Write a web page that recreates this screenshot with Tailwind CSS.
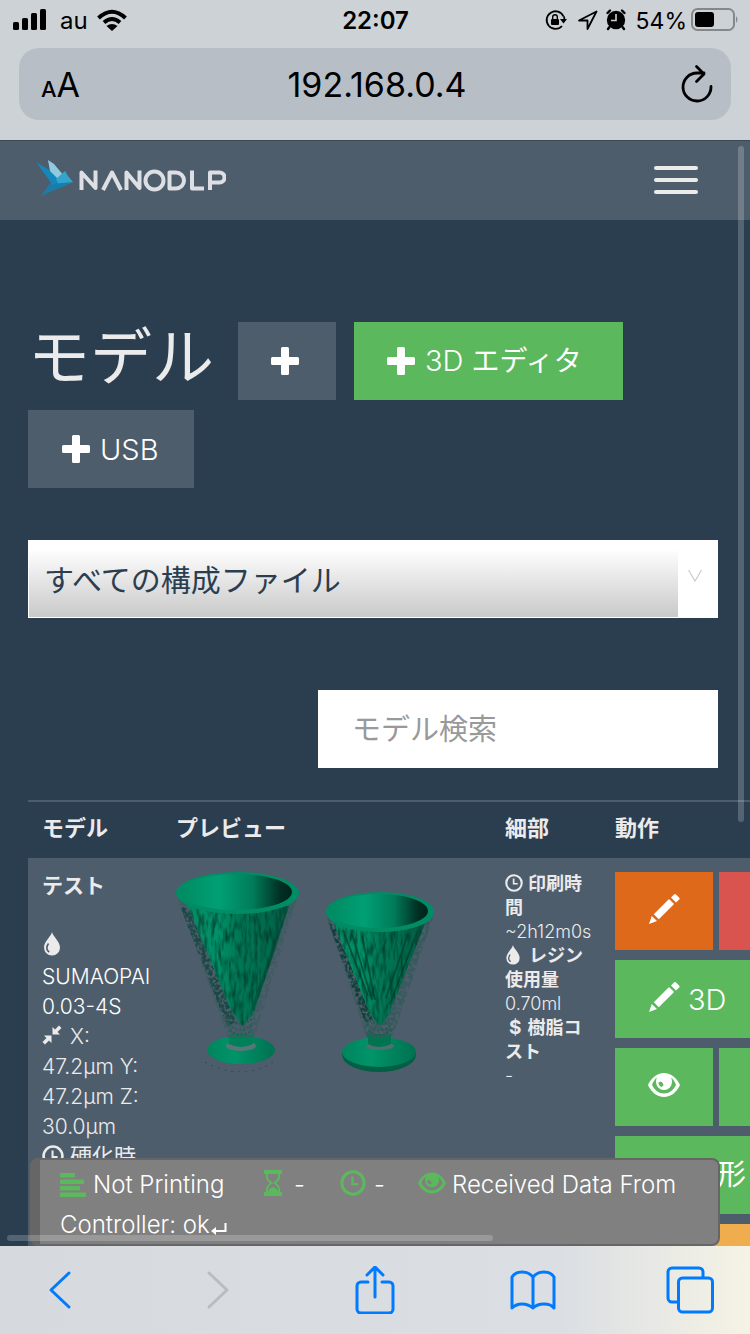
<!DOCTYPE html>
<html lang="ja">
<head>
<meta charset="utf-8">
<meta name="viewport" content="width=device-width">
<title>NanoDLP</title>
<script src="https://cdn.jsdelivr.net/npm/@tailwindcss/browser@4"></script>
</head>
<body class="flex h-screen flex-col overflow-hidden bg-[#2b3e50] font-['Inter','Noto_Sans_CJK_JP',sans-serif] font-light text-[#ebebeb]">

<svg class="hidden" aria-hidden="true">
  <symbol id="plus" viewBox="0 0 28 28"><path fill="currentColor" d="M11.500 0h5a1.500 1.500 0 0 1 1.500 1.500V10h8.500a1.500 1.500 0 0 1 1.500 1.500v5a1.500 1.500 0 0 1-1.500 1.500H18v8.500a1.500 1.500 0 0 1-1.500 1.500h-5a1.500 1.500 0 0 1-1.500-1.500V18H1.500A1.500 1.500 0 0 1 0 16.500v-5A1.500 1.500 0 0 1 1.500 10H10V1.500A1.500 1.500 0 0 1 11.500 0z"/></symbol>
  <symbol id="pencil" viewBox="0 0 32 32"><path fill="currentColor" d="M1 31 3.800 23 9 28ZM5.800 21.300 20.500 6.500Q21 6 21.500 6.500L25.600 10.500Q26 11 25.600 11.500L10.800 26.200ZM23 4.500 26 1.500Q27 .7 28 1.500L31.300 4.800Q32 5.800 31.300 6.600L28 9.500Z"/></symbol>
  <symbol id="drop" viewBox="0 0 18 24"><path fill="currentColor" d="M9 0C9.500 4 17 9.500 17 15.500A8 8 0 0 1 1 15.500C1 9.500 8.500 4 9 0z"/><path fill="none" stroke="#4e5d6c" stroke-width="1.600" d="M5.500 11.500C3 15 3.300 18 6.200 20"/></symbol>
  <symbol id="clock" viewBox="0 0 24 24"><circle cx="12" cy="12" r="10.300" fill="none" stroke="currentColor" stroke-width="2.800"/><path fill="none" stroke="currentColor" stroke-width="2.200" d="M11.500 6v7H17"/></symbol>
  <symbol id="eye" viewBox="0 0 32 24"><path fill="currentColor" fill-rule="evenodd" d="M16 0C23 0 29 5 32 12 29 19 23 24 16 24S3 19 0 12C3 5 9 0 16 0zM9 4.500C6.500 6.500 5 9 4 12c2.500 5 7 8.500 12 8.500s9.500-3.500 12-8.500c-1-3-2.500-5.500-5-7.500q1 2 1 4.500a8 8 0 0 1-16 0q0-2.500 1-4.500z"/><path d="M12.500 8.500Q15 9 15.500 12.500L13.500 14Q10.500 12.500 10.500 9.500z" fill="var(--color-eye, #5cb85c)"/></symbol>
</svg>

<header class="shrink-0 border-b border-[#3b4856] bg-[#cdd2d6] text-black">
  <div class="flex h-10 items-center justify-between pr-[11px] pl-3 font-normal">
    <div class="flex flex-1 items-center">
      <svg class="h-6 w-9" viewBox="0 0 36 24"><rect x="1" y="14" width="6" height="8" rx="1.500"/><rect x="10" y="10" width="6" height="12" rx="1.500"/><rect x="19" y="5" width="6" height="17" rx="1.500"/><rect x="28" y="1" width="6" height="21" rx="1.500"/></svg>
      <span class="ml-3 pt-0.5 text-2xl">au</span>
      <svg class="ml-2 h-6 w-8" viewBox="0 0 32 24" fill="none" stroke="#000" stroke-width="4"><path d="M2.500 10Q16-2.500 29.500 10"/><path d="M8 14.500Q16 7.500 24 14.500"/><path d="M16 23 10.500 18Q16 14 21.500 18Z" fill="#000" stroke="none"/></svg>
    </div>
    <span class="pt-0.5 text-2xl font-semibold">22:07</span>
    <div class="flex flex-1 items-center justify-end">
      <svg class="h-6 w-6" viewBox="0 0 24 24"><path fill="none" stroke="#000" stroke-width="1.800" d="M19.500 8.500A8.800 8.800 0 1 0 18 18M20 8.500a9 9 0 0 1 .3 4"/><path d="M16 11h7l-3.500 4.500z"/><rect x="7" y="11" width="8" height="6" rx="1"/><path fill="none" stroke="#000" stroke-width="1.400" d="M8.700 11V9a2.300 2.300 0 0 1 4.600 0v2"/></svg>
      <svg class="ml-2 h-6 w-6" viewBox="0 0 24 24" fill="none" stroke="#000" stroke-width="1.800" stroke-linejoin="round"><path d="M20.500 3.500 3 12.500h8.500V21z"/></svg>
      <svg class="ml-1 h-6 w-6" viewBox="0 0 24 24"><circle cx="12" cy="12" r="9.200"/><path stroke="#000" stroke-width="2.400" stroke-linecap="round" d="M3.500 5 6 2.500M20.500 5 18 2.500M5.500 19 4 21M18.500 19 20 21"/><path fill="none" stroke="#cdd2d6" stroke-width="1.600" d="M12 6v6.500H7"/></svg>
      <span class="ml-2 pt-0.5 text-[23px]">54%</span>
      <svg class="ml-1 h-6 w-12" viewBox="0 0 48 24"><rect x="1" y="1" width="42" height="21" rx="5.500" fill="none" stroke="#84888b" stroke-width="2"/><rect x="4" y="4" width="19" height="15" rx="3"/><path d="M45 8q3 3.500 0 7z" fill="#84888b"/></svg>
    </div>
  </div>
  <div class="mx-[19px] mt-2 mb-5 flex h-[72px] items-center justify-between rounded-[20px] bg-[#b7bec5] px-[18px] font-normal">
    <button type="button" aria-label="表示設定" class="flex flex-1 items-baseline pl-1"><span class="text-[22px] font-medium">A</span><span class="text-[34px]">A</span></button>
    <span class="text-[34px]">192.168.0.4</span>
    <div class="flex flex-1 justify-end"><button type="button" aria-label="再読み込み"><svg class="h-10 w-8" viewBox="0 0 32 40" fill="none" stroke="#000" stroke-width="2.800" stroke-linecap="round" stroke-linejoin="round"><path d="M30 22.500a14 14 0 1 1-14-13.500H23M15.500 2.500 23 10l-7.500 7.500"/></svg></button></div>
  </div>
</header>

<main class="relative min-h-0 flex-1 overflow-hidden">
  <nav class="flex h-[79px] items-center justify-between bg-[#4e5d6c] pr-[52px] pb-px pl-9">
    <a href="#" class="flex items-center pb-0.5" aria-label="NanoDLP">
      <svg class="h-[38px] w-[190px]" viewBox="0 0 190 38">
        <path fill="#1f7ba6" d="M5 36 15 22 30 25Z"/><path fill="#1587ba" d="M0 2 16 12 28 24 16 24Z"/><path fill="#8fcbe0" d="M12 0 18 4 28 16 22 19 14 11Z"/><path fill="#35a4cd" d="M20 19 29 11 32 16 37 22 24 27Z"/><path fill="#1280ae" d="M15 24 37 22 20 29Z"/>
        <g fill="none" stroke="#dddfe4" stroke-width="4" stroke-linejoin="round"><path d="M45.500 30V12.500L59.500 28V10.500M67 30 76 12.500 85 30M90.500 30V12.500L103.500 28V10.500"/><ellipse cx="118.500" cy="20.500" rx="9" ry="9"/><path d="M133.500 12.500h6.500a8 8 0 0 1 0 16h-6.500ZM156 10.500v18h12M174 30V12.500h9.500a4.500 4.500 0 0 1 0 10h-9.500"/></g>
      </svg>
    </a>
    <button type="button" aria-label="メニュー" class="flex w-11 flex-col gap-2"><span class="h-1 rounded-sm bg-[#ebebeb]"></span><span class="h-1 rounded-sm bg-[#ebebeb]"></span><span class="h-1 rounded-sm bg-[#ebebeb]"></span></button>
  </nav>

  <div class="px-7 pt-[102px] pr-8">
    <div class="flex flex-wrap items-center gap-x-[18px] gap-y-[10px] text-[29px] text-white">
      <h1 class="mr-1 h-[78px] w-[188px] text-[62px] leading-[72px] font-normal whitespace-nowrap text-[#ebebeb]">モデル</h1>
      <button type="button" aria-label="追加" class="flex h-[78px] w-[98px] items-center bg-[#4e5d6c] pl-[33px]"><svg class="size-7"><use href="#plus"/></svg></button>
      <button type="button" class="flex h-[78px] w-[269px] items-center gap-[10px] bg-[#5cb85c] pl-[33px]"><svg class="size-7"><use href="#plus"/></svg><span class="whitespace-nowrap">3D <span class="text-[28px] font-normal">エディタ</span></span></button>
      <button type="button" class="flex h-[78px] w-[166px] items-center gap-[10px] bg-[#4e5d6c] pl-[34px]"><svg class="size-7"><use href="#plus"/></svg><span class="pt-0.5">USB</span></button>
    </div>

    <div class="relative mt-[52px]">
      <select aria-label="構成ファイル" class="block h-[78px] w-full appearance-none rounded-none border border-white bg-white bg-linear-to-b from-white from-10% to-[#c9c9c9] pt-0.5 pl-[15px] text-[30px] font-normal text-[#2b3e50]"><option>すべての構成ファイル</option></select>
      <span class="pointer-events-none absolute inset-y-0 right-0 flex w-10 justify-center bg-white pt-[29px] pr-[6px]"><svg class="h-[14px] w-[14px]" viewBox="0 0 14 14" fill="none" stroke="#ccc" stroke-width="1.200"><path d="M.5 1 7 12 13.500 1"/></svg></span>
    </div>

    <input type="search" aria-label="モデル検索" placeholder="モデル検索" class="mt-[72px] ml-auto block h-[78px] w-[400px] appearance-none rounded-none bg-white px-[34px] text-[29px] font-normal text-[#2b3e50] placeholder:text-[#999]">
  </div>

  <div class="mt-8 ml-7 overflow-hidden">
    <table class="w-[890px] table-fixed border-collapse text-left">
      <thead>
        <tr class="h-[57px] border-t-2 border-[#4e5d6c] text-[22px] font-bold">
          <th class="w-[134px] pb-1 pl-[14px]">モデル</th><th class="w-[329px] pb-1 pl-[14px]">プレビュー</th><th class="w-[110px] pb-1 pl-[14px]">細部</th><th class="pb-1 pl-[14px]">動作</th>
        </tr>
      </thead>
      <tbody>
        <tr class="bg-[#4e5d6c] align-top">
          <td class="pt-[13px] pl-[14px] text-[21px] leading-[30px]">
            <strong class="block font-bold">テスト</strong>
            <svg class="mt-[31px] mb-[1px] h-6 w-5"><use href="#drop"/></svg>
            <span class="mt-[6px] block whitespace-nowrap text-white">SUMAOPAI<br>0.03-4S</span>
            <span class="block"><svg class="mr-2 inline size-5 align-[-1px]" viewBox="0 0 20 20" fill="currentColor"><path d="M10.500 9.500V2l2.500 2.500L17 .5 19.500 3 15.500 7l2.500 2.500zM9.500 10.500V18L7 15.500 3 19.500.5 17 4.500 13 2 10.500z"/></svg>X:<br>47.2μm Y:<br>47.2μm Z:<br>30.0μm</span>
            <span class="block text-[22px] leading-7 font-normal"><svg class="mr-[6px] inline size-[22px] align-[-3px]"><use href="#clock"/></svg>硬化時</span>
          </td>
          <td class="pt-[14px] pl-[14px]">
            <svg class="h-[200px] w-[260px]" viewBox="0 0 260 200" role="img" aria-label="モデルのプレビュー">
              <defs>
                <linearGradient id="bowl"><stop offset="0" stop-color="#008b62"/><stop offset=".35" stop-color="#00a074"/><stop offset=".65" stop-color="#007c59"/><stop offset=".9" stop-color="#012e23"/><stop offset="1" stop-color="#01241c"/></linearGradient>
                <linearGradient id="cone"><stop offset="0" stop-color="#078a63"/><stop offset=".3" stop-color="#019068"/><stop offset=".5" stop-color="#007755"/><stop offset=".8" stop-color="#006a4c"/><stop offset="1" stop-color="#0b5443"/></linearGradient>
                <linearGradient id="foot"><stop offset="0" stop-color="#00845e"/><stop offset=".4" stop-color="#009469"/><stop offset="1" stop-color="#007150"/></linearGradient>
                <filter id="grain" x="0" y="0" width="1" height="1" color-interpolation-filters="sRGB"><feTurbulence type="fractalNoise" baseFrequency=".28 .07" numOctaves="2" seed="4"/><feColorMatrix values="0 0 0 0 0  0 0 0 0 .25  0 0 0 0 .18  2.200 0 0 0 -.9"/><feComposite in2="SourceGraphic" operator="in" result="n"/><feMerge><feMergeNode in="SourceGraphic"/><feMergeNode in="n"/></feMerge></filter>
                <filter id="haze" x="0" y="0" width="1" height="1" color-interpolation-filters="sRGB"><feTurbulence type="fractalNoise" baseFrequency=".3 .3" numOctaves="2" seed="9"/><feColorMatrix values="0 0 0 0 0  0 0 0 0 0  0 0 0 0 0  4 0 0 0 -1.400"/><feComposite in="SourceGraphic" operator="in"/></filter>
              </defs>
              <g>
                <path d="M29 190q36 20 68 0" fill="none" stroke="#2e4a50" stroke-width="1" stroke-dasharray="2 5"/>
                <ellipse cx="65" cy="178" rx="34" ry="14" fill="url(#foot)"/>
                <ellipse cx="65" cy="174" rx="15" ry="5" fill="#58767a"/>
                <path d="M53 162h24v10q-12 6-24 0z" fill="#008059"/>
                <path d="M2 26 52 166h26L121 26z" fill="#3c5c60" filter="url(#haze)"/>
                <path d="M3 32 51 154 60 150 16 40z" fill="#1b4844" filter="url(#haze)"/>
                <path d="M11 32 55 138q8 12 12 16 4-4 11-14L113 34z" fill="url(#cone)" filter="url(#grain)"/>
                <path d="M112 36 100 76 78 138 74 140 98 70z" fill="#023a2a" opacity=".4"/>
                <path fill="none" stroke="#1b5c50" stroke-width="1.400" stroke-dasharray="2 2" d="M53 146q12 12 24 0M53 152q12 12 24 0M54 158q11 10 22 0"/>
                <ellipse cx="61.500" cy="21" rx="61.500" ry="21" fill="#008c64"/>
                <ellipse cx="60" cy="20" rx="56" ry="18" fill="url(#bowl)"/>
              </g>
              <g>
                <ellipse cx="203" cy="183" rx="37" ry="17" fill="#005f44"/>
                <ellipse cx="203" cy="180" rx="37" ry="15" fill="url(#foot)"/>
                <ellipse cx="204" cy="174" rx="14" ry="4" fill="#4a7270"/>
                <path d="M192 162h23v10q-12 6-23 0z" fill="#00734f"/>
                <path d="M151 46 191 166h25L257 46z" fill="#36595b" filter="url(#haze)"/>
                <path d="M152 50 189 150 197 148 164 58z" fill="#123f39" filter="url(#haze)"/>
                <path d="M158 52 194 142q8 10 10 12 4-4 9-12L249 52z" fill="url(#cone)" filter="url(#grain)"/>
                <path fill="none" stroke="#023d2d" stroke-width="1.800" opacity=".7" d="M167 58 192 124M176 62 196 128M186 64 199 128M242 58 214 132M232 62 210 126"/>
                <path fill="none" stroke="#1b5c50" stroke-width="1.400" stroke-dasharray="2 2" d="M190 146q14 12 26 0M191 152q13 12 25 0M192 158q12 10 23 0"/>
                <ellipse cx="204" cy="40" rx="54" ry="20" fill="#008c64"/>
                <ellipse cx="203" cy="39" rx="49" ry="17" fill="url(#bowl)"/>
              </g>
            </svg>
          </td>
          <td class="pt-[14px] pl-[14px] text-[18px] leading-6">
            <strong class="block font-bold"><svg class="mr-[5px] inline size-[18px] align-[-2px]"><use href="#clock"/></svg>印刷時<br>間</strong>~2h12m0s
            <strong class="block font-bold"><svg class="mr-2 inline h-5 w-4 align-[-3px]"><use href="#drop"/></svg>レジン<br>使用量</strong>0.70ml
            <strong class="block font-bold"><span class="mr-[6px] ml-1 text-[19px]">$</span>樹脂コ<br>スト</strong>-
          </td>
          <td class="pt-[14px] pb-[14px] pl-[14px] text-[29px] text-white">
            <div class="flex flex-col gap-[10px]">
              <div class="flex gap-[6px]">
                <button type="button" aria-label="編集" class="flex h-[78px] w-[98px] shrink-0 items-center justify-center bg-[#df691a] pb-1"><svg class="size-8"><use href="#pencil"/></svg></button>
                <button type="button" aria-label="削除" class="h-[78px] w-[98px] bg-[#d9534f]"></button>
              </div>
              <button type="button" class="flex h-[78px] w-[146px] items-center gap-2 bg-[#5cb85c] pl-[33px]"><svg class="mb-1 size-8"><use href="#pencil"/></svg><span class="pt-0.5">3D</span></button>
              <div class="flex gap-[6px]">
                <button type="button" aria-label="表示" class="flex h-[78px] w-[98px] shrink-0 items-center justify-center bg-[#5cb85c] pb-1"><svg class="h-6 w-8"><use href="#eye"/></svg></button>
                <button type="button" aria-label="ダウンロード" class="h-[78px] w-[98px] bg-[#5cb85c]"></button>
              </div>
              <button type="button" class="h-[78px] w-[200px] bg-[#5cb85c] pl-[102px] text-left font-normal whitespace-nowrap">形</button>
              <button type="button" aria-label="その他" class="h-[78px] w-[200px] bg-[#f0ad4e]"></button>
            </div>
          </td>
        </tr>
      </tbody>
    </table>
  </div>

  <!-- printer status, floating over the page -->
  <div class="absolute right-[30px] bottom-0 left-[30px] rounded-lg border-2 border-l-10 border-[#666] bg-[#808080] pt-1 pl-5 text-[24px] text-white">
    <div class="flex h-[42px] items-center whitespace-nowrap">
      <svg class="h-6 w-[26px] text-[#5cb85c]" viewBox="0 0 26 24" fill="currentColor"><rect width="15" height="4.500" rx="1"/><rect y="6.500" width="24" height="4.500" rx="1"/><rect y="13" width="20" height="4.500" rx="1"/><rect y="19.500" width="26" height="4.500" rx="1"/></svg>
      <span class="ml-[7px] w-[171px]">Not Printing</span>
      <svg class="mb-1 h-[26px] w-[18px] text-[#5cb85c]" viewBox="0 0 18 26"><path fill="currentColor" d="M0 0h18v4H0zM0 22h18v4H0z"/><path fill="none" stroke="currentColor" stroke-width="2" d="M3 3v4q0 3 4.500 6Q3 16 3 19v4M15 3v4q0 3-4.500 6 4.500 3 4.500 6v4"/><path fill="currentColor" d="M4 22q1-4 5-5 4 1 5 5z"/></svg>
      <span class="ml-3 w-[46px]">-</span>
      <svg class="mb-1 size-[26px] text-[#5cb85c]"><use href="#clock"/></svg>
      <span class="ml-2 w-[44px]">-</span>
      <svg class="mb-1 h-[22px] w-7 text-[#5cb85c] [--color-eye:#808080]"><use href="#eye"/></svg>
      <span class="ml-[6px]">Received Data From</span>
    </div>
    <div class="flex h-[38px] items-center">Controller: ok<svg class="mt-2 ml-px h-3 w-4" viewBox="0 0 16 12"><path fill="none" stroke="#fff" stroke-width="2" d="M14.500 0v8H3"/><path fill="#fff" d="M0 8l5-4v8z"/></svg></div>
  </div>
  <div class="absolute top-[5px] right-[6px] h-[676px] w-[6px] rounded-full bg-white/20"></div>
  <div class="absolute bottom-[5px] left-[7px] h-[6px] w-[486px] rounded-full bg-white/20"></div>
</main>

<footer class="flex h-[88px] shrink-0 items-center justify-between bg-[#dbdfe4] bg-linear-to-r from-[#d6dade] via-[#dbdfe3] via-75% to-[#f5f3e5] px-9 text-[#007aff]">
  <button type="button" aria-label="戻る" class="flex w-12 justify-center"><svg class="h-10 w-6" viewBox="0 0 24 40" fill="none" stroke="currentColor" stroke-width="3" stroke-linecap="round" stroke-linejoin="round"><path d="M21 3 3 20l18 17"/></svg></button>
  <button type="button" aria-label="進む" disabled class="flex w-12 justify-center text-[#b9bdc0]"><svg class="h-10 w-6" viewBox="0 0 24 40" fill="none" stroke="currentColor" stroke-width="3" stroke-linecap="round" stroke-linejoin="round"><path d="M3 3 21 20 3 37"/></svg></button>
  <button type="button" aria-label="共有" class="flex w-12 justify-center"><svg class="h-12 w-10" viewBox="0 0 40 48" fill="none" stroke="currentColor" stroke-width="3" stroke-linecap="round" stroke-linejoin="round"><path d="M13 16H6a4 4 0 0 0-4 4v23a4 4 0 0 0 4 4h28a4 4 0 0 0 4-4V20a4 4 0 0 0-4-4h-7M20 31V2M12 9l8-8 8 8"/></svg></button>
  <button type="button" aria-label="ブックマーク" class="flex w-12 justify-center"><svg class="h-10 w-[46px]" viewBox="0 0 46 40" fill="none" stroke="currentColor" stroke-width="3" stroke-linejoin="round"><path d="M23 7Q19 2 12 2T2 7v31q4-4 10-4t11 4q4-4 11-4t10 4V7q-3-5-10-5T23 7zV38"/></svg></button>
  <button type="button" aria-label="タブ" class="flex w-12 justify-center"><svg class="h-12 w-12" viewBox="0 0 48 48" fill="none" stroke="currentColor" stroke-width="3"><path d="M12.500 36H6a4 4 0 0 1-4-4V6a4 4 0 0 1 4-4h27a4 4 0 0 1 4 4v6"/><rect x="12.500" y="12" width="34" height="34" rx="4"/></svg></button>
</footer>
</body>
</html>
